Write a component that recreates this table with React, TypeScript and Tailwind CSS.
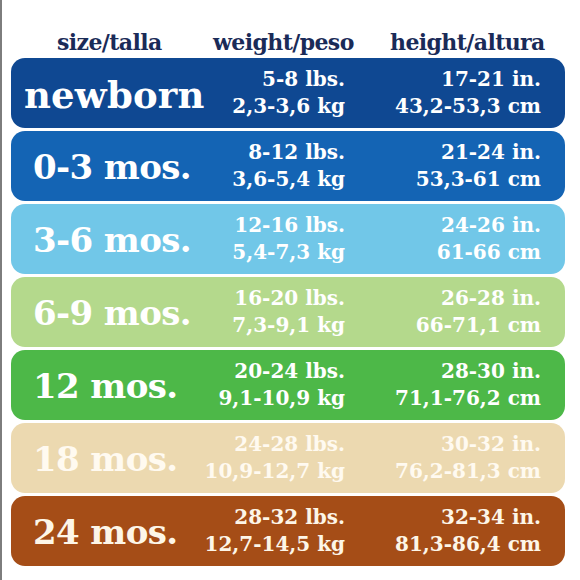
import React from 'react'

interface SizeRow {
  label: string
  lbs: string
  kg: string
  inches: string
  cm: string
  bg: string
  text: string
  big?: boolean
}

const rows: SizeRow[] = [
  { label: 'newborn', lbs: '5-8 lbs.', kg: '2,3-3,6 kg', inches: '17-21 in.', cm: '43,2-53,3 cm', bg: 'bg-[#0f4892]', text: 'text-white', big: true },
  { label: '0-3 mos.', lbs: '8-12 lbs.', kg: '3,6-5,4 kg', inches: '21-24 in.', cm: '53,3-61 cm', bg: 'bg-[#1464b4]', text: 'text-white' },
  { label: '3-6 mos.', lbs: '12-16 lbs.', kg: '5,4-7,3 kg', inches: '24-26 in.', cm: '61-66 cm', bg: 'bg-[#71c7e8]', text: 'text-white' },
  { label: '6-9 mos.', lbs: '16-20 lbs.', kg: '7,3-9,1 kg', inches: '26-28 in.', cm: '66-71,1 cm', bg: 'bg-[#b4d98c]', text: 'text-white' },
  { label: '12 mos.', lbs: '20-24 lbs.', kg: '9,1-10,9 kg', inches: '28-30 in.', cm: '71,1-76,2 cm', bg: 'bg-[#4db848]', text: 'text-white' },
  { label: '18 mos.', lbs: '24-28 lbs.', kg: '10,9-12,7 kg', inches: '30-32 in.', cm: '76,2-81,3 cm', bg: 'bg-[#ecd9b0]', text: 'text-[#fffaf0]' },
  { label: '24 mos.', lbs: '28-32 lbs.', kg: '12,7-14,5 kg', inches: '32-34 in.', cm: '81,3-86,4 cm', bg: 'bg-[#a54d17]', text: 'text-[#fdf6e8]' },
]

export default function App() {
  return (
    <div className="flex w-[580px] h-[580px] bg-white overflow-hidden font-['DejaVu_Serif',serif] font-bold">
      <div className="w-[2px] shrink-0 bg-[#7d7d7d]" />
      <div className="flex flex-col gap-[3px] pl-[9px]">
        {/* column headers */}
        <div className="h-[55px] pt-[30px] pl-[46px] grid grid-cols-[156px_177px_160px] text-[22px] leading-[24px] text-[#1a2b58] tracking-[-0.6px]">
          <span>size/talla</span>
          <span>weight/peso</span>
          <span>height/altura</span>
        </div>

        {rows.map((row) => (
          <div
            key={row.label}
            className={`w-[554px] h-[70px] rounded-[14px] grid grid-cols-[189px_145px_196px] items-center pr-[24px] ${row.bg} ${row.text}`}
          >
            <div
              className={
                row.big
                  ? 'pl-[13px] pt-[4px] text-[37px] leading-none tracking-[0.2px]'
                  : 'pl-[22px] pt-[2px] text-[34px] leading-none tracking-[-0.6px] whitespace-nowrap'
              }
            >
              {row.label}
            </div>
            <div className="text-right text-[20px] leading-[27px] whitespace-nowrap">
              <div>{row.lbs}</div>
              <div>{row.kg}</div>
            </div>
            <div className="text-right text-[20px] leading-[27px] whitespace-nowrap">
              <div>{row.inches}</div>
              <div>{row.cm}</div>
            </div>
          </div>
        ))}
      </div>
    </div>
  )
}
